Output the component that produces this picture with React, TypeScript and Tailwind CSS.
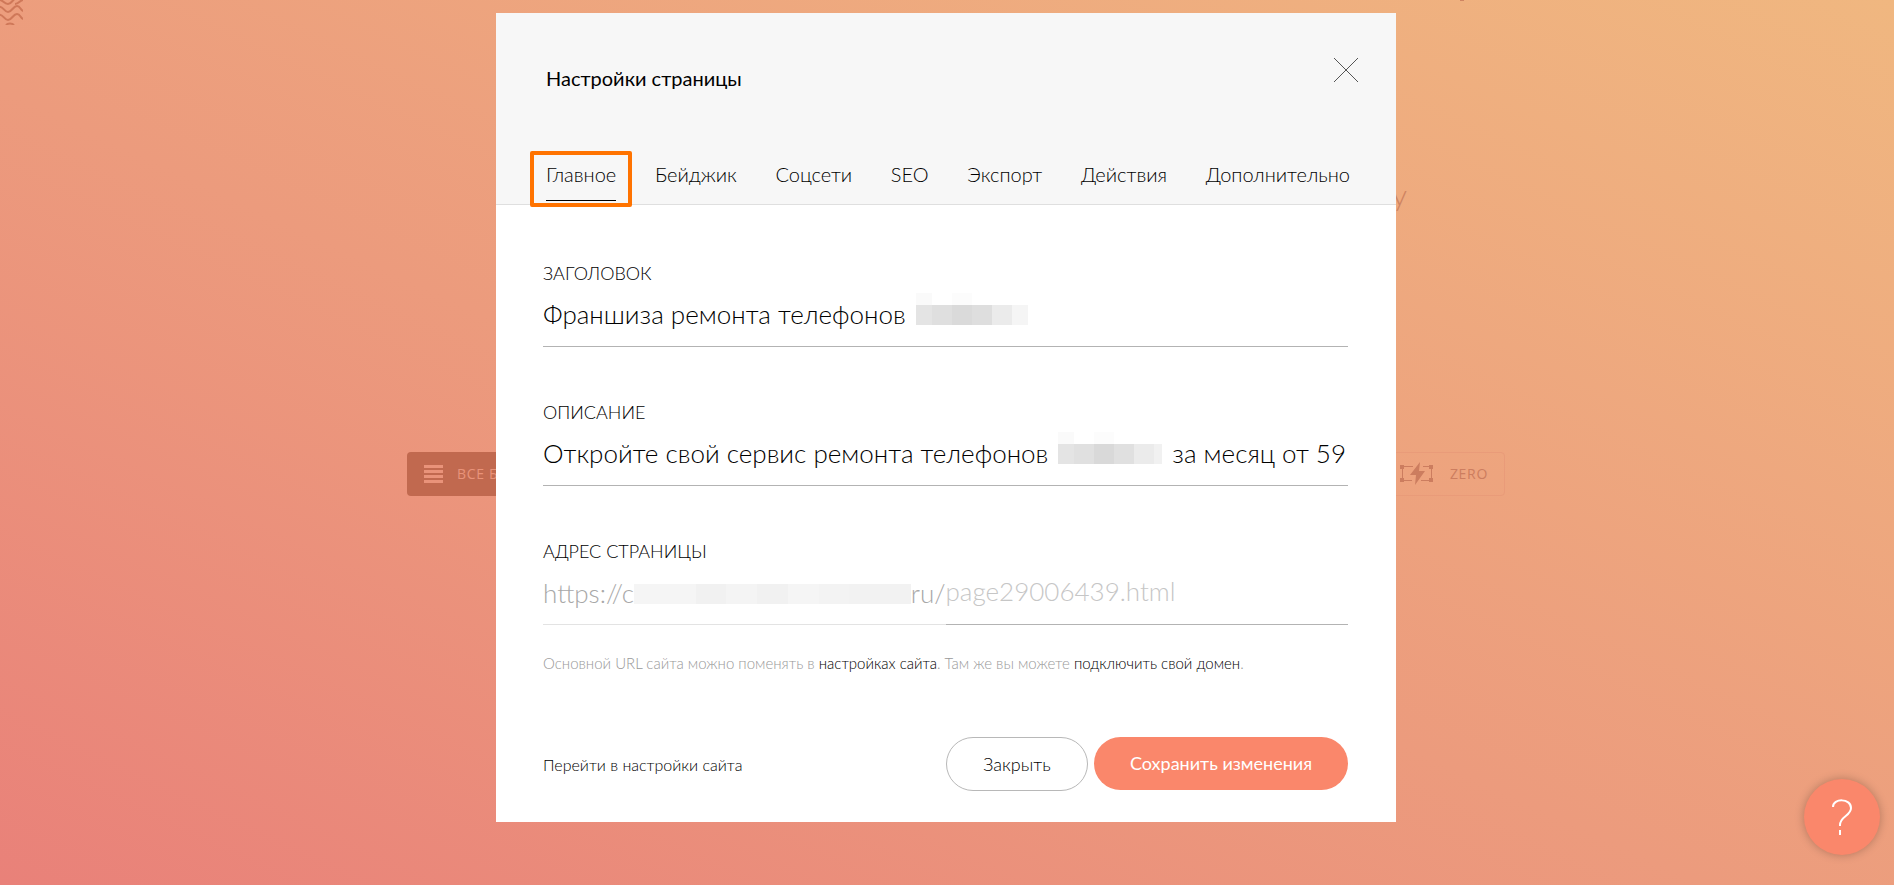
import { useState } from "react";

const tabs = ["Главное", "Бейджик", "Соцсети", "SEO", "Экспорт", "Действия", "Дополнительно"];

const Mosaic = ({ cells, top }: { cells: string[]; top: string[] }) => (
  <div className="shrink-0" aria-hidden="true">
    <div className="flex h-3">
      {top.map((cell, i) => (
        <div key={i} className={cell} />
      ))}
    </div>
    <div className="flex h-5">
      {cells.map((cell, i) => (
        <div key={i} className={cell} />
      ))}
    </div>
    <div className="h-2.5" />
  </div>
);

const titleCells = [
  "w-4 bg-[#e4e4e4]",
  "w-5 bg-[#dfdfdf]",
  "w-5 bg-[#dadada]",
  "w-5 bg-[#dedede]",
  "w-5 bg-[#ebebeb]",
  "w-4 bg-[#f5f5f5]",
];
const descrCells = [
  "w-4 bg-[#e4e4e4]",
  "w-5 bg-[#e0e0e0]",
  "w-5 bg-[#d9d9d9]",
  "w-5 bg-[#e0e0e0]",
  "w-5 bg-[#ebebeb]",
  "w-2 bg-[#f1f1f1]",
];
const topCells = ["w-4 bg-[#fafafa]", "w-5", "w-5 bg-[#fcfcfc]"];

const inputClass = "min-w-0 bg-transparent text-[26px] leading-8 font-light text-black outline-none";
const labelClass = "block text-lg leading-6 font-light text-black";
const rowClass = "flex h-[62px] items-center gap-2.5 border-b border-[#b3b3b3] pb-1";

const Backdrop = () => (
  <div className="absolute inset-0 overflow-hidden" aria-hidden="true">
    <svg className="absolute left-0 top-0" width="23" height="25" fill="none" stroke="#cf7859" strokeWidth="2">
      <path d="M0 0C3 0 4 4 8 4s5-6 9-6" />
      <path d="M15 4c4 0 5-4 8-4" />
      <path d="M-2 7c5-2 6 5 10 5s5-6 9-6 3 5 7 5" />
      <path d="M-2 15c5-2 6 5 10 5s5-6 9-6 3 5 7 5" />
      <path d="M6 25c2-2 6-2 8 0" />
    </svg>
    <div className="absolute left-[1392px] top-[176px] text-3xl font-light text-[#cf8462]">у</div>
    <div className="absolute left-[1460px] top-0 h-px w-1 bg-[#cf8462]" />
    <div className="absolute left-[407px] top-[452px] flex h-11 w-[300px] items-center gap-3.5 rounded bg-[#c1694f] px-[17px] font-['Open_Sans',sans-serif] text-sm font-medium tracking-wider text-[#e9937a]">
      <svg width="19" height="18" fill="currentColor">
        <path d="M0 0h19v3H0zM0 5h19v3H0zM0 10h19v3H0zM0 15h19v3H0z" />
      </svg>
      ВСЕ БЛОКИ
    </div>
    <div className="absolute left-[1300px] top-[452px] flex h-11 w-[205px] items-center justify-end gap-4 rounded border border-[#e99b79] px-4 font-['Open_Sans',sans-serif] text-sm font-medium tracking-wider text-[#cc7d5f]">
      <svg width="34" height="24" fill="currentColor">
        <path d="M0 3h4v4H0zM29 3h4v4h-4zM0 16h4v4H0zM29 16h4v4h-4z" />
        <path d="M3 4.500h10M3 18.500h9M23 4.500h8M21 18.500h10M2.500 4v14M31.500 4v14" stroke="currentColor" />
        <path d="M20 0 10 13h6l-1 10 10-14h-6z" />
      </svg>
      ZERO
    </div>
  </div>
);

const App = () => {
  const [active, setActive] = useState("Главное");

  return (
    <div className="relative min-h-screen overflow-hidden bg-linear-to-tr from-[#e98179] via-[#ec9b7d] via-45% to-[#f0b780] pt-[13px] pr-0.5 font-['Lato','Open_Sans',sans-serif]">
      <Backdrop />

      <main className="relative mx-auto w-full max-w-[900px] bg-white">
        <header className="border-b border-[#dfdfdf] bg-[#f7f7f7] pr-[46px] pl-[50px]">
          <div className="flex items-start justify-between pt-[45px]">
            <h1 className="pt-1.5 text-xl leading-7 text-black">Настройки страницы</h1>
            <button type="button" aria-label="Закрыть окно" className="-mr-2">
              <svg width="24" height="24" stroke="#555" fill="none">
                <path d="M0 0l24 24M24 0L0 24" />
              </svg>
            </button>
          </div>
          <nav className="mt-[47px] flex justify-between">
            {tabs.map((tab) => (
              <button
                key={tab}
                type="button"
                onClick={() => setActive(tab)}
                className="relative h-[65px] pt-1 text-xl font-light text-black"
              >
                {tab}
                {tab === active && (
                  <>
                    <span className="absolute inset-x-0 bottom-[3px] h-px bg-black" />
                    <span className="absolute -inset-x-4 -bottom-[3px] top-[12px] rounded-xs border-4 border-[#ff7300]" />
                  </>
                )}
              </button>
            ))}
          </nav>
        </header>

        <form className="px-12 pt-14 pb-[31px] pl-[47px]" onSubmit={(e) => e.preventDefault()}>
          <div>
            <label htmlFor="title" className={labelClass}>ЗАГОЛОВОК</label>
            <div className={rowClass}>
              <input id="title" defaultValue="Франшиза ремонта телефонов" className={`${inputClass} field-sizing-content`} />
              <Mosaic cells={titleCells} top={topCells} />
            </div>
          </div>

          <div className="mt-[53px]">
            <label htmlFor="descr" className={labelClass}>ОПИСАНИЕ</label>
            <div className={rowClass}>
              <input
                id="descr"
                defaultValue="Откройте свой сервис ремонта телефонов"
                className={`${inputClass} shrink-0 field-sizing-content`}
              />
              <Mosaic cells={descrCells} top={topCells} />
              <input aria-label="Описание, продолжение" defaultValue="за месяц от 59" className={`${inputClass} flex-1`} />
            </div>
          </div>

          <div className="mt-[53px]">
            <label htmlFor="address" className={labelClass}>АДРЕС СТРАНИЦЫ</label>
            <div className="flex h-[62px]">
              <div className="flex flex-1 items-center border-b border-[#e3e3e3] text-[26px] font-light text-[#a8a8a8]">
                https://c
                <span className="flex h-5 flex-1">
                  <span className="flex-2 bg-[#f5f5f5]" />
                  <span className="flex-1 bg-[#f1f1f1]" />
                  <span className="flex-1 bg-[#f4f4f4]" />
                  <span className="flex-1 bg-[#f1f1f1]" />
                  <span className="flex-1 bg-[#f5f5f5]" />
                  <span className="flex-1 bg-[#f3f3f3]" />
                  <span className="flex-2 bg-[#f2f2f2]" />
                </span>
                ru/
              </div>
              <input
                id="address"
                placeholder="page29006439.html"
                className="min-w-0 flex-1 border-b border-[#b3b3b3] pb-1 text-[26px] font-light outline-none placeholder:text-[#c6c6c6]"
              />
            </div>
          </div>

          <p className="mt-[26px] text-[15px] leading-6 font-light text-[#999999]">
            Основной URL сайта можно поменять в <a href="#site" className="text-black">настройках сайта</a>. Там же вы
            можете <a href="#domain" className="text-black">подключить свой домен</a>.
          </p>

          <div className="mt-[62px] flex items-center justify-between">
            <a href="#site" className="pt-0.5 text-base font-light text-black">Перейти в настройки сайта</a>
            <div className="flex gap-1.5">
              <button type="button" className="h-[54px] w-[142px] rounded-full border border-[#b8b8b8] text-lg font-light text-black">
                Закрыть
              </button>
              <button type="submit" className="h-[53px] w-[254px] rounded-full bg-[#fa876b] pb-0.5 text-lg text-white">
                Сохранить изменения
              </button>
            </div>
          </div>
        </form>
      </main>

      <button
        type="button"
        aria-label="Помощь"
        className="absolute right-3.5 bottom-[30px] flex size-[76px] items-center justify-center rounded-full bg-[#fa876b] shadow-[0_0_10px_rgba(0,0,0,0.25)]"
      >
        <svg width="20" height="36" viewBox="0 0 20 36" fill="none" stroke="#fff" strokeWidth="2">
          <path d="M1 8c0-9 18-9 18 1 0 8-11 8-11 17v1M8 31v5" />
        </svg>
      </button>
    </div>
  );
};

export default App;
